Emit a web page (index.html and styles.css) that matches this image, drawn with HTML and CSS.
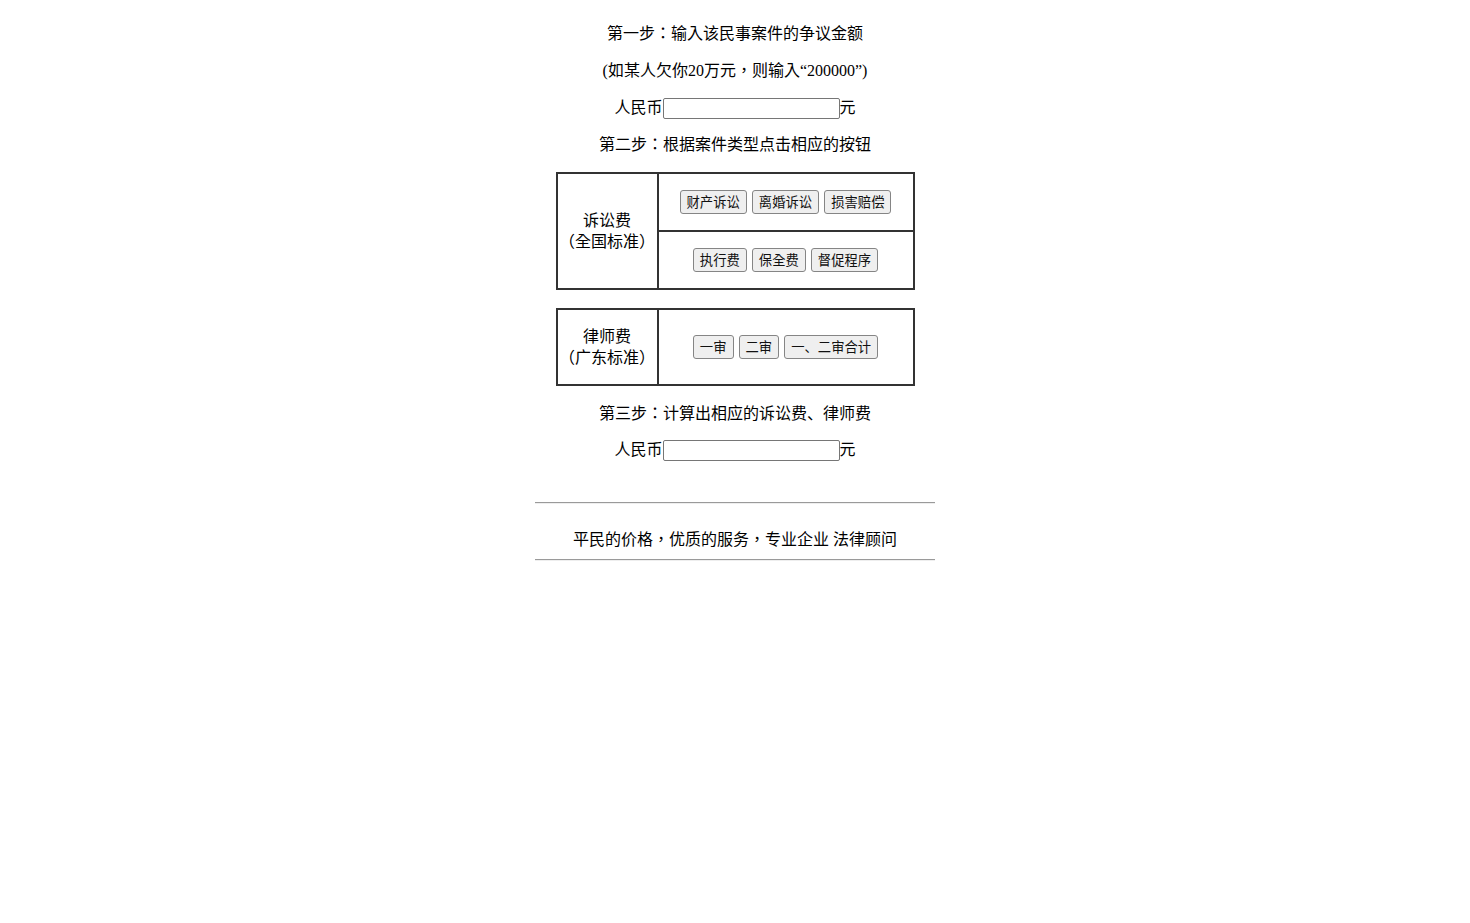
FILE: index.html
```html
<!DOCTYPE html>
<html>
<head>
<meta charset="utf-8">
<link rel="stylesheet" href="styles.css">
</head>
<body>
<div class="wrap">
  <p class="line">第一步：输入该民事案件的争议金额</p>
  <p class="line">(如某人欠你20万元，则输入“200000”)</p>
  <p class="line">人民币<input class="amount" type="text">元</p>
  <p class="line">第二步：根据案件类型点击相应的按钮</p>
  <table class="fees">
    <tr>
      <td class="label" rowspan="2">诉讼费<br>（全国标准）</td>
      <td class="btns"><button class="btn">财产诉讼</button><button class="btn">离婚诉讼</button><button class="btn">损害赔偿</button></td>
    </tr>
    <tr>
      <td class="btns"><button class="btn">执行费</button><button class="btn">保全费</button><button class="btn">督促程序</button></td>
    </tr>
  </table>
  <table class="fees second">
    <tr>
      <td class="label tall">律师费<br>（广东标准）</td>
      <td class="btns"><button class="btn">一审</button><button class="btn">二审</button><button class="btn">一<span class="sc">、</span>二审合计</button></td>
    </tr>
  </table>
  <p class="line">第三步：计算出相应的诉讼费<span class="sc">、</span>律师费</p>
  <p class="line">人民币<input class="amount" type="text">元</p>
  <div class="footer">
    <hr class="rule">
    <p class="slogan">平民的价格，优质的服务，专业企业 法律顾问</p>
    <hr class="rule bottom">
  </div>
</div>
</body>
</html>
```
FILE: styles.css
```css
body {
  margin: 7px 8px 8px 8px;
  font-family: "Liberation Serif", "Noto Sans CJK TC", serif;
  font-size: 16px;
  color: #000;
  background: #fff;
  text-spacing-trim: space-all;
}
.wrap {
  display: flex;
  flex-direction: column;
  align-items: center;
}
.line {
  margin: 16px 0 0 0;
  height: 21px;
  line-height: 21px;
  text-align: center;
  white-space: nowrap;
}
.sc {
  font-family: "Noto Sans CJK SC", sans-serif;
}
.amount {
  box-sizing: border-box;
  width: 177px;
  height: 21px;
  padding: 1px 2px;
  margin: 1px 0 0 0;
  border: 1px solid #767676;
  border-radius: 2px;
  vertical-align: top;
  font-size: 13px;
}
.fees {
  border-collapse: collapse;
  border: 2px solid #333;
  margin-top: 17px;
  width: 359px;
}
.fees.second {
  margin-top: 18px;
}
.fees td {
  border: 2px solid #333;
  padding: 0;
  text-align: center;
}
.label {
  width: 99px;
  line-height: 21px;
}
.btns {
  height: 56px;
  white-space: nowrap;
}
.tall {
  height: 74px;
}
.btn {
  font-family: "Noto Sans CJK TC", sans-serif;
  font-size: 13.333px;
  height: 24px;
  padding: 0 6px;
  margin: 0 2.5px;
  background: #efefef;
  border: 1px solid #858585;
  border-radius: 3px;
  color: #111;
  line-height: 20px;
}
.footer {
  width: 400px;
  margin-top: 34px;
}
.rule {
  border: none;
  border-top: 1px solid #9a9a9a;
  border-bottom: 1px solid #eee;
  margin: 8px 0 0 0;
}
.slogan {
  margin: 25px 0 0 0;
  line-height: 21px;
  text-align: center;
}
.rule.bottom {
  margin-top: 9px;
}
```
